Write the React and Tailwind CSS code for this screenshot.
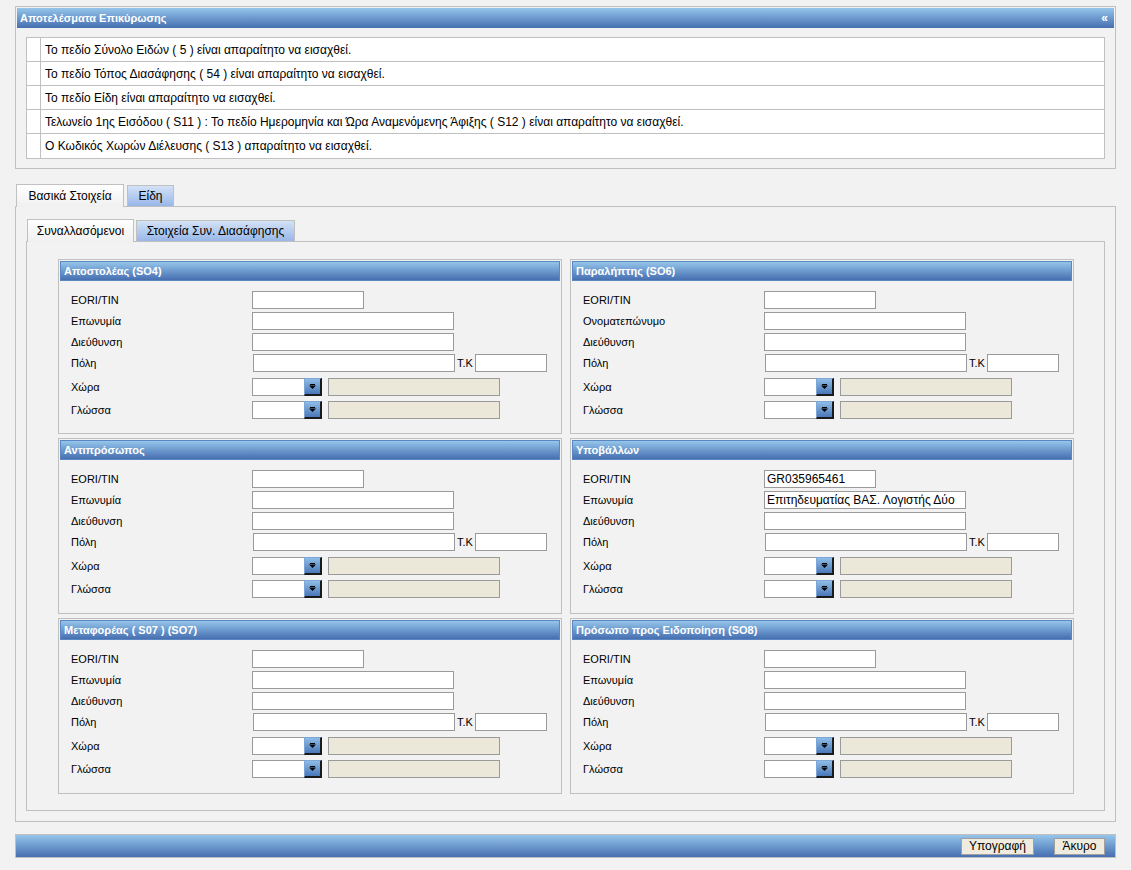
import React from "react";

const msgs = [
  "Το πεδίο Σύνολο Ειδών ( 5 ) είναι απαραίτητο να εισαχθεί.",
  "Το πεδίο Τόπος Διασάφησης ( 54 ) είναι απαραίτητο να εισαχθεί.",
  "Το πεδίο Είδη είναι απαραίτητο να εισαχθεί.",
  "Τελωνείο 1ης Εισόδου ( S11 ) : Το πεδίο Ημερομηνία και Ώρα Αναμενόμενης Άφιξης ( S12 ) είναι απαραίτητο να εισαχθεί.",
  "Ο Κωδικός Χωρών Διέλευσης ( S13 ) απαραίτητο να εισαχθεί.",
];

const parties = [
  { title: "Αποστολέας (SO4)", name: "Επωνυμία" },
  { title: "Παραλήπτης (SO6)", name: "Ονοματεπώνυμο" },
  { title: "Αντιπρόσωπος", name: "Επωνυμία" },
  { title: "Υποβάλλων", name: "Επωνυμία", eori: "GR035965461", nameVal: "Επιτηδευματίας ΒΑΣ. Λογιστής Δύο" },
  { title: "Μεταφορέας ( S07 ) (SO7)", name: "Επωνυμία" },
  { title: "Πρόσωπο προς Ειδοποίηση (SO8)", name: "Επωνυμία" },
];

const Bar = ({ children, className = "" }) => (
  <div className={"bg-linear-to-b from-[#95c5ea] to-[#476fb1] text-white font-bold text-[11px] flex items-center " + className}>
    {children}
  </div>
);

const Field = ({ w, value }) => (
  <div className={"h-[18px] bg-white border border-[#9a9a9a] text-[12px] leading-[16px] px-[2px] text-black whitespace-nowrap overflow-hidden " + w}>
    {value}
  </div>
);

const Combo = () => (
  <div className="flex items-center">
    <div className="w-[52px] h-[18px] bg-white border border-[#9a9a9a] border-r-0"></div>
    <div className="w-[18px] h-[18px] bg-linear-to-b from-[#8fbde6] to-[#4a78b9] border-t border-l border-t-[#7da6d6] border-l-[#7da6d6] border-r-2 border-b-2 border-[#1a1a1a] flex items-center justify-center">
      <svg width="7" height="5" viewBox="0 0 7 5">
        <rect x="1" y="0" width="5" height="1" fill="#000" />
        <path d="M0 1.5 H7 L3.5 5 Z" fill="#000" />
      </svg>
    </div>
    <div className="ml-[6px] w-[172px] h-[18px] bg-[#ebe8d9] border border-[#9a9a9a]"></div>
  </div>
);

const Label = ({ children }) => <div className="w-[181px] text-[11px] text-black">{children}</div>;

const Party = ({ p, h }) => (
  <div className={"border border-[#c0c0c0] p-px " + h}>
    <Bar className="h-[20px] px-[3px] border border-[#5a86c2]">{p.title}</Bar>
    <div className="pl-[11px] pt-[10px] flex flex-col">
      <div className="flex items-center h-[18px]">
        <Label>EORI/TIN</Label>
        <Field w="w-[112px]" value={p.eori} />
      </div>
      <div className="flex items-center h-[18px] mt-[3px]">
        <Label>{p.name}</Label>
        <Field w="w-[202px]" value={p.nameVal} />
      </div>
      <div className="flex items-center h-[18px] mt-[3px]">
        <Label>Διεύθυνση</Label>
        <Field w="w-[202px]" />
      </div>
      <div className="flex items-center h-[18px] mt-[3px]">
        <Label>Πόλη</Label>
        <div className="ml-px flex items-center">
          <Field w="w-[202px]" />
          <span className="text-[11px] w-[20px] pl-[2px] text-black">Τ.Κ</span>
          <Field w="w-[72px]" />
        </div>
      </div>
      <div className="flex items-center h-[18px] mt-[6px]">
        <Label>Χώρα</Label>
        <Combo />
      </div>
      <div className="flex items-center h-[18px] mt-[5px]">
        <Label>Γλώσσα</Label>
        <Combo />
      </div>
    </div>
  </div>
);

const Tab = ({ active, w, children }) =>
  active ? (
    <div className={"h-[23px] bg-linear-to-b from-[#ffffff] to-[#f0f0f0] border border-[#c0c0c0] border-b-0 -mb-px relative z-10 text-[12px] flex items-center justify-center text-black " + w}>
      {children}
    </div>
  ) : (
    <div className={"h-[21px] mt-px bg-linear-to-b from-[#d3e2f6] to-[#98b7e8] border border-[#c0c0c0] border-b-0 text-[12px] flex items-center justify-center text-black " + w}>
      {children}
    </div>
  );

export default function App() {
  const heights = ["h-[175px]", "h-[175px]", "h-[176px]", "h-[176px]", "h-[176px]", "h-[176px]"];
  return (
    <div className="w-[1131px] min-h-[870px] bg-[#f2f2f2] px-[15px] pt-[6px] font-['Liberation_Sans',Arial,sans-serif]">
      {/* validation results */}
      <div className="border border-[#c0c0c0] p-px h-[163px]">
        <Bar className="h-[20px] pl-[3px] pr-[6px] justify-between">
          <span>Αποτελέσματα Επικύρωσης</span>
          <span className="text-[12px] leading-none">«</span>
        </Bar>
        <div className="ml-[9px] mt-[9px] w-[1079px] border border-[#c0c0c0] bg-white">
          {msgs.map((m, i) => (
            <div key={i} className={"flex h-[24px] " + (i < msgs.length - 1 ? "border-b border-[#c0c0c0]" : "h-[23px]")}>
              <div className="w-[14px] border-r border-[#c0c0c0]"></div>
              <div className="pl-[4px] flex items-center text-[12px] text-black whitespace-nowrap">{m}</div>
            </div>
          ))}
        </div>
      </div>

      {/* main tabs */}
      <div className="mt-[15px] flex gap-[3px] pl-px">
        <Tab active w="w-[108px]">Βασικά Στοιχεία</Tab>
        <Tab w="w-[47px]">Είδη</Tab>
      </div>
      <div className="border border-[#c0c0c0] h-[616px] pl-[10px] pr-[10px] pt-[12px]">
        <div className="flex gap-[2px] pl-px">
          <Tab active w="w-[107px]">Συναλλασόμενοι</Tab>
          <Tab w="w-[159px]">Στοιχεία Συν. Διασάφησης</Tab>
        </div>
        <div className="border border-[#c0c0c0] h-[570px] pl-[31px] pt-[17px]">
          <div className="grid grid-cols-[504px_504px] gap-x-[8px] gap-y-[4px]">
            {parties.map((p, i) => (
              <Party key={i} p={p} h={heights[i]} />
            ))}
          </div>
        </div>
      </div>

      {/* bottom bar */}
      <div className="mt-[12px] border border-[#c0c0c0]">
        <Bar className="h-[22px] justify-end pr-[10px] gap-[20px]">
          <button className="w-[73px] h-[17px] bg-[#efebde] border border-[#a0a0a0] text-black font-normal text-[12px] leading-none">Υπογραφή</button>
          <button className="w-[51px] h-[17px] bg-[#efebde] border border-[#a0a0a0] text-black font-normal text-[12px] leading-none">Άκυρο</button>
        </Bar>
      </div>
    </div>
  );
}
